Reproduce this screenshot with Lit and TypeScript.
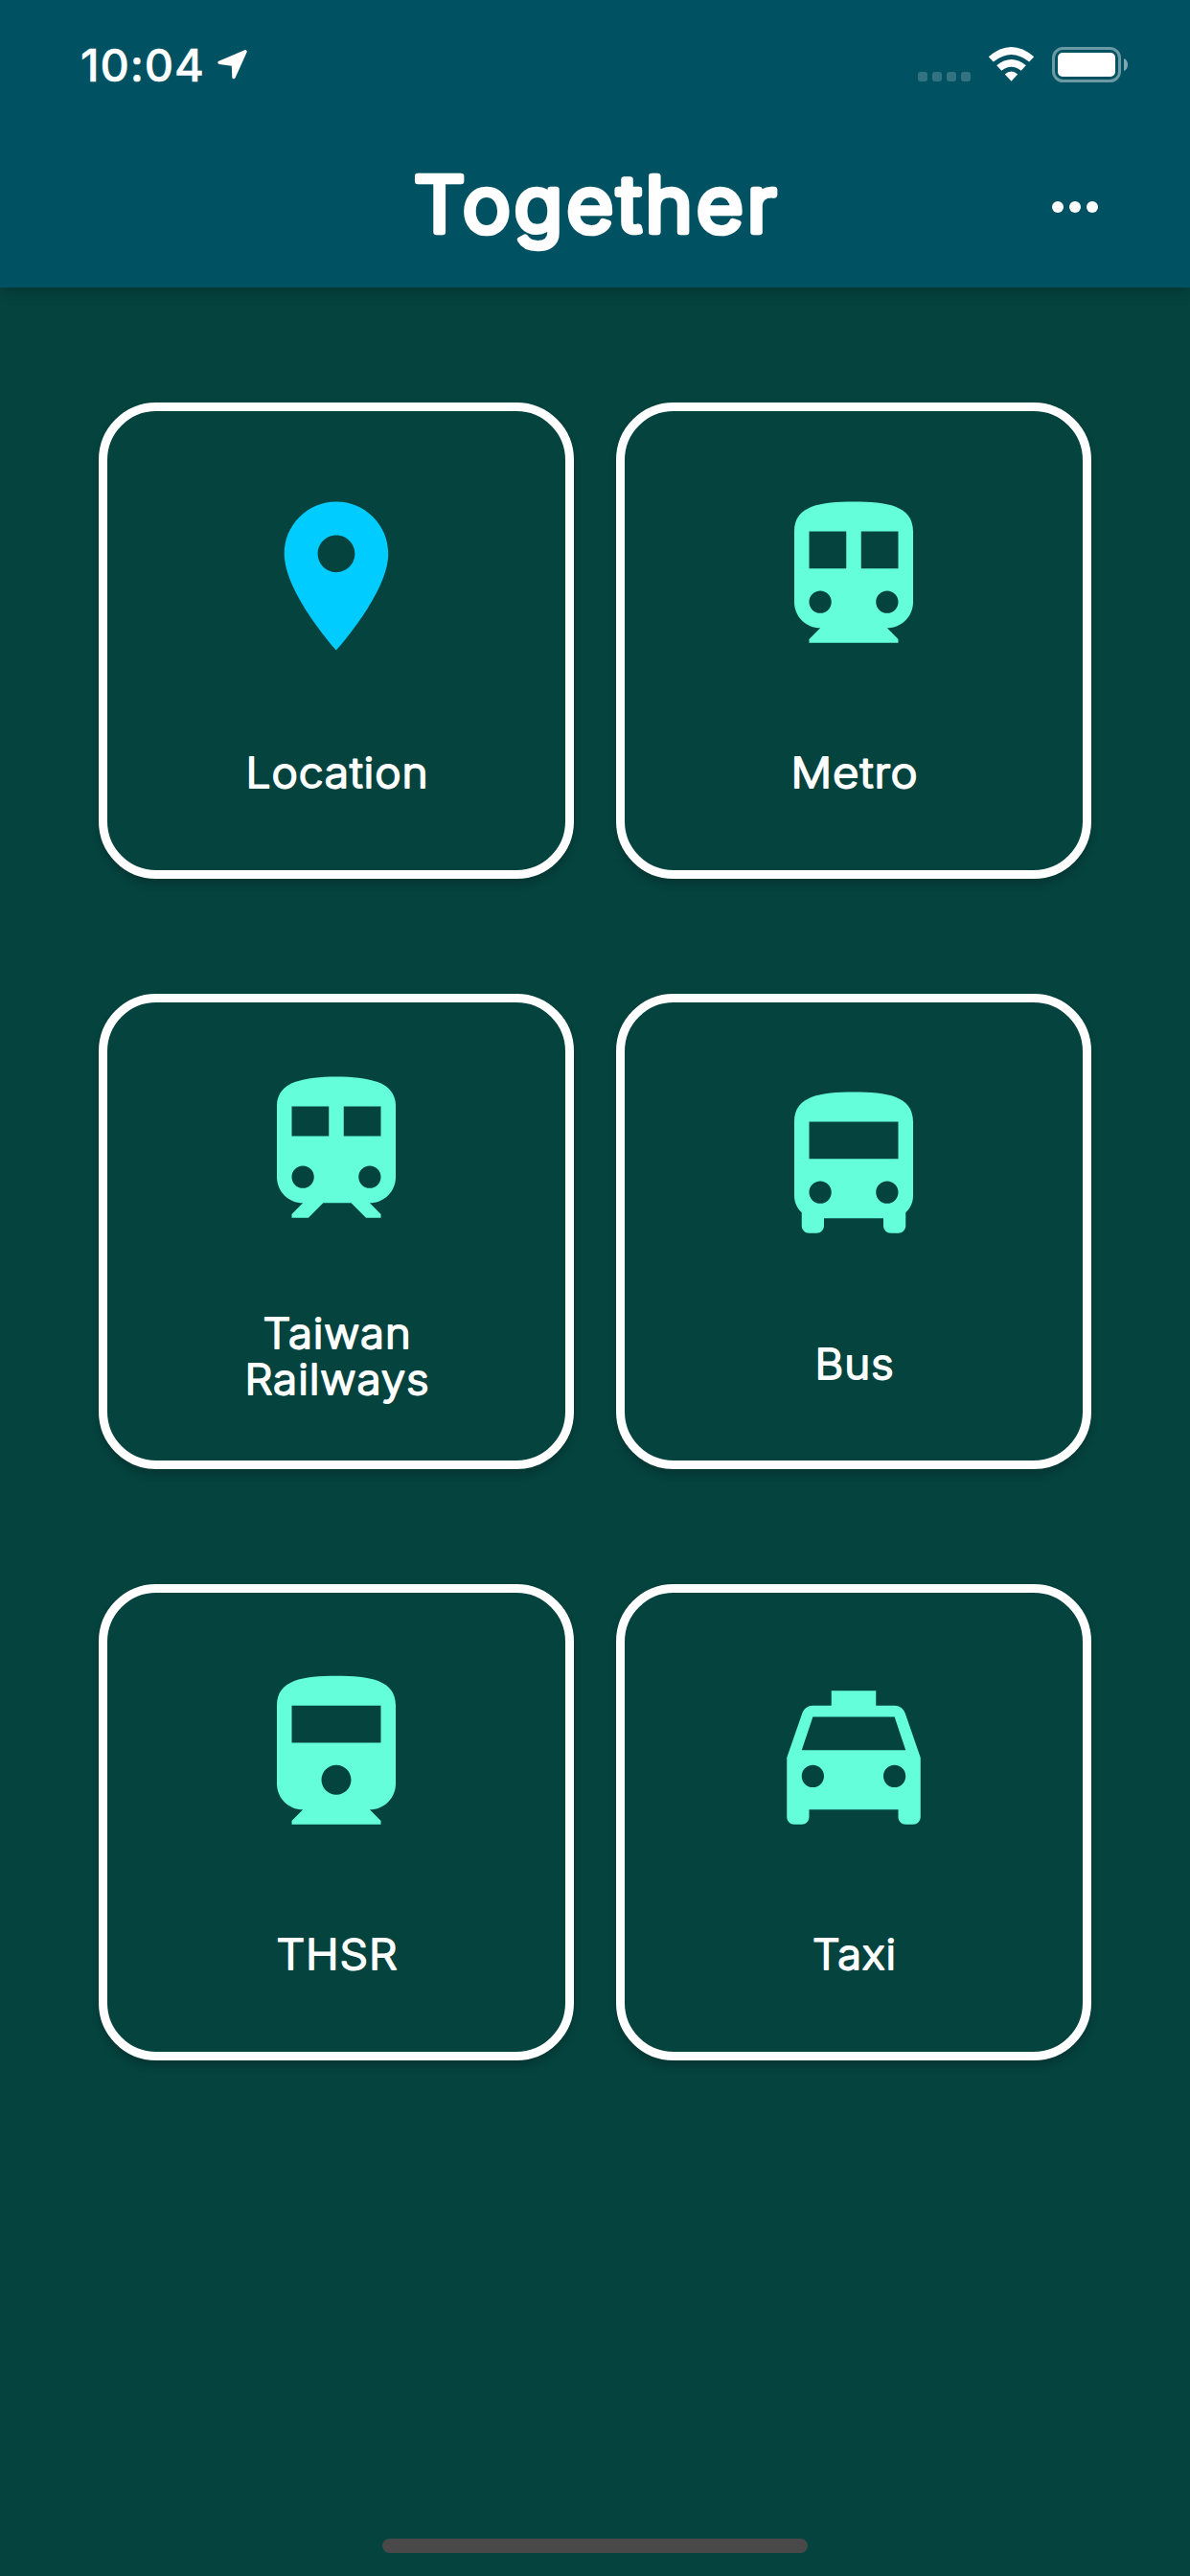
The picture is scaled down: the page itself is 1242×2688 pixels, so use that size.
import { LitElement, html, css, svg } from "lit";
import { customElement, property } from "lit/decorators.js";

interface Line {
  text: string;
  width: number;
}

interface Tile {
  label: Line[];
  icon: string;
  tone?: string;
}

const LAMPS =
  "M7.5 17c-.83 0-1.5-.67-1.5-1.5S6.67 14 7.5 14s1.5.67 1.5 1.5S8.33 17 7.5 17zM16.5 17c-.83 0-1.5-.67-1.5-1.5s.67-1.5 1.5-1.5 1.5.67 1.5 1.5-.67 1.5-1.5 1.5z";

const TILES: Tile[] = [
  {
    label: [{ text: "Location", width: 191 }],
    tone: "place",
    icon: "M12 2C8.13 2 5 5.13 5 9c0 5.25 7 13 7 13s7-7.75 7-13c0-3.87-3.13-7-7-7zm0 9.5c-1.38 0-2.5-1.12-2.5-2.5s1.12-2.5 2.5-2.5 2.5 1.12 2.5 2.5-1.12 2.5-2.5 2.5z",
  },
  {
    label: [{ text: "Metro", width: 133 }],
    icon: "M12 2c-4.42 0-8 .5-8 4v9.5C4 17.43 5.57 19 7.5 19L6 20.5v.5h12v-.5L16.5 19c1.93 0 3.5-1.57 3.5-3.5V6c0-3.5-3.58-4-8-4zM11 11H6V6h5v5zm2 0V6h5v5h-5z" + LAMPS,
  },
  {
    label: [
      { text: "Taiwan", width: 155 },
      { text: "Railways", width: 193 },
    ],
    icon: "M12 2C9.8 2 8 2.2 6.43 2.72C4.9 3.2 4 4.5 4 5.8V15.5C4 17.43 5.57 19 7.5 19L6 20.5v.5h2.23l2-2H14l2 2h2v-.5L16.5 19c1.93 0 3.5-1.57 3.5-3.5V5.8C20 4.5 19.1 3.2 17.57 2.72C16 2.2 14.2 2 12 2zM11 10H6V6h5v4zm2 0V6h5v4h-5z" + LAMPS,
  },
  {
    label: [{ text: "Bus", width: 83 }],
    icon: "M4 16c0 .88.39 1.67 1 2.22V20c0 .55.45 1 1 1h1c.55 0 1-.45 1-1v-1h8v1c0 .55.45 1 1 1h1c.55 0 1-.45 1-1v-1.78c.61-.55 1-1.34 1-2.22V6c0-3.5-3.58-4-8-4s-8 .5-8 4v10zM18 11H6V6h12v5z" + LAMPS,
  },
  {
    label: [{ text: "THSR", width: 127 }],
    icon: "M4 15.5C4 17.43 5.57 19 7.5 19L6 20.5v.5h12v-.5L16.5 19c1.93 0 3.5-1.57 3.5-3.5V5c0-3.5-3.58-4-8-4s-8 .5-8 4v10.5zm8 1.5c-1.1 0-2-.9-2-2s.9-2 2-2 2 .9 2 2-.9 2-2 2zm6-7H6V5h12v5z",
  },
  {
    label: [{ text: "Taxi", width: 88 }],
    icon: "M18.92 6.01C18.72 5.42 18.16 5 17.5 5H15V3H9v2H6.5c-.66 0-1.21.42-1.42 1.01L3 12v8c0 .55.45 1 1 1h1c.55 0 1-.45 1-1v-1h12v1c0 .55.45 1 1 1h1c.55 0 1-.45 1-1v-8l-2.08-5.99zM6.5 16c-.83 0-1.5-.67-1.5-1.5S5.67 13 6.5 13s1.5.67 1.5 1.5S7.33 16 6.5 16zm11 0c-.83 0-1.5-.67-1.5-1.5s.67-1.5 1.5-1.5 1.5.67 1.5 1.5-.67 1.5-1.5 1.5zM5 11l1.5-4.5h11L19 11H5z",
  },
];

@customElement("status-bar")
class StatusBar extends LitElement {
  static styles = css`
    :host {
      display: flex;
      height: 132px;
      padding: 0 62px 0 84px;
      box-sizing: border-box;
      justify-content: space-between;
      color: #fff;
    }
    .clock {
      display: flex;
      padding-top: 40px;
      gap: 12px;
    }
    .time {
      font: 500 47px/56px Inter, "Liberation Sans", sans-serif;
      letter-spacing: 0.9px;
      -webkit-text-stroke: 0.5px #fff;
    }
    .arrow {
      margin-top: 11px;
      width: 34px;
      height: 34px;
    }
    .signals {
      width: 222px;
      height: 42px;
      margin-top: 46px;
    }
  `;

  render() {
    return html`
      <div class="clock">
        <span class="time">10:04</span>
        <svg class="arrow" viewBox="0 0 34 34">
          <path d="M3 14.2L30 2.8L18 29.6L17.4 16.2Z" fill="#fff" stroke="#fff" stroke-width="3.4" stroke-linejoin="round" />
        </svg>
      </div>
      <svg class="signals" viewBox="958 46 222 42">
        ${[958, 973, 988, 1003].map(
          (x) => svg`<rect x=${x} y="75" width="10" height="10" rx="3" fill="#fff" opacity=".2" />`
        )}
        <path fill="#fff" d="M1031.8 59.2Q1055.5 38.8 1079.2 59.2L1074.2 64.6Q1055.5 49.4 1036.8 64.6Z" />
        <path fill="#fff" d="M1040.2 68.3Q1055.5 55.5 1070.8 68.3L1065.7 73.8Q1055.5 65.5 1045.3 73.8Z" />
        <path fill="#fff" d="M1048.8 77.4Q1055.5 71.8 1062.2 77.4L1055.5 84.8Z" />
        <rect x="1099.5" y="50.5" width="69" height="34" rx="10" fill="none" stroke="#fff" stroke-width="3" opacity=".42" />
        <rect x="1104" y="55" width="60" height="25" rx="5" fill="#fff" />
        <path fill="#fff" opacity=".5" d="M1173 61C1178.4 63 1178.4 72 1173 74Z" />
      </svg>
    `;
  }
}

@customElement("nav-bar")
class NavBar extends LitElement {
  static styles = css`
    :host {
      display: grid;
      grid-template-columns: 1fr auto 1fr;
      height: 168px;
      align-items: center;
      color: #fff;
    }
    .title {
      grid-column: 2;
      display: block;
      width: 420px;
      height: 120px;
    }
    /* A light face with a round-joined outline gives soft stroke ends. */
    .title-text {
      font: 300 80px Inter, "Liberation Sans", sans-serif;
      letter-spacing: 4px;
      fill: #fff;
      stroke: #fff;
      stroke-width: 6.6px;
      stroke-linejoin: round;
      text-anchor: middle;
    }
    .more {
      justify-self: end;
      display: flex;
      gap: 6px;
      margin: 0 96px 0 0;
    }
    .dot {
      width: 12px;
      height: 12px;
      border-radius: 50%;
      background: #fff;
    }
  `;

  render() {
    return html`
      <svg class="title" viewBox="0 0 420 120">
        <text class="title-text" x="212" y="85.5" textLength="382" lengthAdjust="spacingAndGlyphs">Together</text>
      </svg>
      <div class="more">
        <span class="dot"></span><span class="dot"></span><span class="dot"></span>
      </div>
    `;
  }
}

@customElement("transit-tile")
class TransitTile extends LitElement {
  @property({ attribute: false }) tile!: Tile;

  static styles = css`
    :host {
      display: flex;
      flex-direction: column;
      align-items: center;
      justify-content: space-evenly;
      box-sizing: border-box;
      height: 496.8px;
      border: 9px solid #fff;
      border-radius: 60px;
      background: #05433f;
      box-shadow: 0 6px 9px rgba(0, 0, 0, 0.2);
    }
    .icon {
      width: 186px;
      height: 186px;
      fill: #64ffda;
    }
    .place {
      fill: #00ccff;
    }
    .label {
      display: flex;
      flex-direction: column;
      padding-top: 9px;
    }
    .line {
      display: block;
      width: 300px;
      height: 48px;
      overflow: visible;
    }
    .line-text {
      font: 300 43px Inter, "Liberation Sans", sans-serif;
      letter-spacing: 0.8px;
      fill: #fff;
      stroke: #fff;
      stroke-width: 1.8px;
      stroke-linejoin: round;
      text-anchor: middle;
    }
  `;

  render() {
    return html`
      <svg class="icon ${this.tile.tone ?? ""}" viewBox="0 0 24 24">
        <path fill-rule="evenodd" d=${this.tile.icon} />
      </svg>
      <div class="label">
        ${this.tile.label.map(
          (l) => html`<svg class="line" viewBox="0 0 300 48">
            <text class="line-text" x="151" y="41" textLength=${l.width} lengthAdjust="spacingAndGlyphs">${l.text}</text>
          </svg>`
        )}
      </div>
    `;
  }
}

@customElement("app-root")
class AppRoot extends LitElement {
  static styles = css`
    :host {
      display: flex;
      flex-direction: column;
      height: 2688px;
      overflow: hidden;
      background: #05433f;
    }
    .header {
      height: 300px;
      background: #005162;
      box-shadow: 0 3px 14px rgba(0, 0, 0, 0.25);
    }
    .grid {
      display: grid;
      grid-template-columns: 496.8px 496.8px;
      justify-content: center;
      gap: 119.8px 43.2px;
      padding-top: 120px;
      flex: 1;
      align-content: start;
    }
    .home {
      align-self: center;
      width: 444px;
      height: 15px;
      margin-bottom: 24px;
      border-radius: 8px;
      background: #494949;
    }
  `;

  render() {
    return html`
      <header class="header">
        <status-bar></status-bar>
        <nav-bar></nav-bar>
      </header>
      <main class="grid">
        ${TILES.map((t) => html`<transit-tile .tile=${t}></transit-tile>`)}
      </main>
      <div class="home"></div>
    `;
  }
}
